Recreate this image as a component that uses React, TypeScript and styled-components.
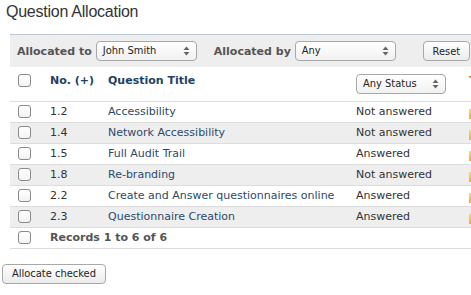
import styled, { createGlobalStyle } from "styled-components";

const Global = createGlobalStyle`
  html, body {
    margin: 0;
    padding: 0;
    background: #fff;
    overflow: hidden;
  }
  body {
    font-family: "DejaVu Sans", Verdana, sans-serif;
    font-size: 11px;
    color: #333;
  }
`;

const Page = styled.div`
  width: 471px;
  height: 295px;
  overflow: hidden;
`;

const Title = styled.h1`
  margin: 0;
  padding: 3px 0 0 6px;
  height: 34px;
  box-sizing: border-box;
  font-family: "Liberation Sans", Arial, sans-serif;
  font-weight: normal;
  font-size: 16px;
  letter-spacing: -0.25px;
  color: #333;
`;

const Panel = styled.div`
  margin-left: 10px;
  width: 490px;
`;

const FilterBar = styled.div`
  display: flex;
  align-items: center;
  height: 32px;
  border-top: 1px solid #b9c8d6;
  background: #eee;
  padding-left: 7px;
`;

const FilterLabel = styled.span`
  font-weight: bold;
  color: #555;
  margin-right: 4px;
`;

const Select = styled.div<{ $w: number; $gap?: number }>`
  position: relative;
  width: ${(p) => p.$w}px;
  height: 20px;
  box-sizing: border-box;
  border: 1px solid #a8a8a8;
  border-radius: 4px;
  background: linear-gradient(#fff, #f1f1f1);
  font-family: "DejaVu Sans Condensed", "DejaVu Sans", sans-serif;
  font-size: 11px;
  font-weight: normal;
  color: #222;
  line-height: 18px;
  padding-left: 6px;
  margin-right: ${(p) => p.$gap ?? 0}px;
`;

const Arrows = styled.svg`
  position: absolute;
  right: 6px;
  top: 4px;
`;

const Button = styled.button<{ $w: number }>`
  width: ${(p) => p.$w}px;
  height: 20px;
  box-sizing: border-box;
  border: 1px solid #a8a8a8;
  border-radius: 4px;
  background: linear-gradient(#fff, #ececec);
  font-family: "DejaVu Sans Condensed", "DejaVu Sans", sans-serif;
  font-size: 11px;
  color: #222;
  padding: 0;
`;

const Table = styled.table`
  width: 490px;
  border-collapse: collapse;
  table-layout: fixed;
`;

const HeadCell = styled.th<{ $tint?: string }>`
  height: 34px;
  box-sizing: border-box;
  padding: 7px 0 0;
  vertical-align: top;
  text-align: left;
  font-weight: bold;
  color: ${(p) => p.$tint ?? "#1f3f66"};
  border-bottom: 1px solid #ddd;
`;

const CheckHead = styled(HeadCell)`
  padding: 7px 0 0 8px;
`;

const Row = styled.tr<{ $alt?: boolean }>`
  background: ${(p) => (p.$alt ? "#eee" : "#fff")};
  border-bottom: 1px solid #ddd;
`;

const Cell = styled.td<{ $link?: boolean; $bold?: boolean }>`
  height: 20px;
  padding: 0;
  vertical-align: middle;
  color: ${(p) => (p.$link ? "#2b4a6b" : p.$bold ? "#555" : "#333")};
  font-weight: ${(p) => (p.$bold ? "bold" : "normal")};
  white-space: nowrap;
`;

const CheckCell = styled.td`
  padding: 0 0 0 8px;
  vertical-align: middle;
`;

const Box = styled.span`
  display: block;
  width: 13px;
  height: 13px;
  box-sizing: border-box;
  border: 1px solid #8a8a8a;
  border-radius: 3px;
  background: linear-gradient(#fff, #f3f3f3);
`;

const Marker = styled.span`
  display: block;
  width: 2px;
  height: 10px;
  margin-top: 4px;
  background: linear-gradient(#f3dc6a, #e2b32a);
`;

const Footer = styled.div`
  padding: 15px 0 0 2px;
`;

const Updown = () => (
  <Arrows width="7" height="10" viewBox="0 0 7 10">
    <path d="M3.5 0.5 L6.5 4 H0.5 Z" fill="#666" />
    <path d="M3.5 9.5 L6.5 6 H0.5 Z" fill="#666" />
  </Arrows>
);

const rows = [
  { no: "1.2", title: "Accessibility", status: "Not answered" },
  { no: "1.4", title: "Network Accessibility", status: "Not answered" },
  { no: "1.5", title: "Full Audit Trail", status: "Answered" },
  { no: "1.8", title: "Re-branding", status: "Not answered" },
  { no: "2.2", title: "Create and Answer questionnaires online", status: "Answered" },
  { no: "2.3", title: "Questionnaire Creation", status: "Answered" },
];

export default function App() {
  return (
    <Page>
      <Global />
      <Title>Question Allocation</Title>
      <Panel>
        <FilterBar>
          <FilterLabel>Allocated to</FilterLabel>
          <Select $w={101} $gap={17}>
            John Smith
            <Updown />
          </Select>
          <FilterLabel>Allocated by</FilterLabel>
          <Select $w={101} $gap={27}>
            Any
            <Updown />
          </Select>
          <Button $w={47}>Reset</Button>
        </FilterBar>
        <Table>
          <colgroup>
            <col style={{ width: 40 }} />
            <col style={{ width: 58 }} />
            <col style={{ width: 248 }} />
            <col style={{ width: 113 }} />
            <col style={{ width: 31 }} />
          </colgroup>
          <thead>
            <tr>
              <CheckHead>
                <Box />
              </CheckHead>
              <HeadCell>No. (+)</HeadCell>
              <HeadCell>Question Title</HeadCell>
              <HeadCell>
                <Select $w={90}>
                  Any Status
                  <Updown />
                </Select>
              </HeadCell>
              <HeadCell $tint="#c87a1e">T</HeadCell>
            </tr>
          </thead>
          <tbody>
            {rows.map((r, i) => (
              <Row key={r.no} $alt={i % 2 === 1}>
                <CheckCell>
                  <Box />
                </CheckCell>
                <Cell>{r.no}</Cell>
                <Cell $link>{r.title}</Cell>
                <Cell>{r.status}</Cell>
                <Cell>
                  <Marker />
                </Cell>
              </Row>
            ))}
            <Row>
              <CheckCell>
                <Box />
              </CheckCell>
              <Cell $bold colSpan={4}>
                Records 1 to 6 of 6
              </Cell>
            </Row>
          </tbody>
        </Table>
      </Panel>
      <Footer>
        <Button $w={104}>Allocate checked</Button>
      </Footer>
    </Page>
  );
}
